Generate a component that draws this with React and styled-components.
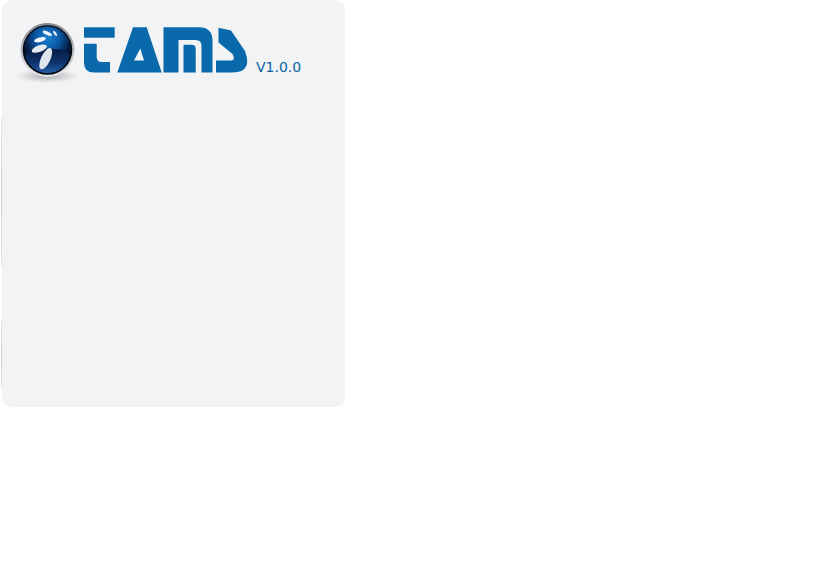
import React from "react";
import styled, { createGlobalStyle } from "styled-components";

const Global = createGlobalStyle`
  html, body { margin: 0; padding: 0; background: #fff; }
  body { font-family: "DejaVu Sans", Verdana, sans-serif; }
`;
const Page = styled.div`
  width: 815px;
  height: 575px;
  padding-left: 2px;
  box-sizing: border-box;
  overflow: hidden;
`;
const Panel = styled.aside`
  position: relative;
  width: 342.500px;
  height: 406.500px;
  background: #f1f3f5;
  border-radius: 10px;
  padding: 22px 0 0 13px;
  box-sizing: border-box;
  &::before, &::after {
    content: "";
    position: absolute;
    left: -1px;
    width: 1px;
    background: linear-gradient(180deg, #e6e8ea, #c9ccd0 50%, #e2e4e6);
  }
  &::before { top: 118px; height: 148px; }
  &::after { top: 320px; height: 68px; }
`;
const Brand = styled.div`
  display: flex;
  align-items: flex-start;
`;
const Mark = styled.svg`
  width: 66px;
  height: 64px;
  flex: none;
  filter: blur(0.35px);
`;
const Word = styled.svg`
  width: 166px;
  height: 50px;
  flex: none;
  margin: 4px 0 0 3px;
  filter: blur(0.25px);
`;
const Version = styled.span`
  color: #0a65a6;
  font-size: 14px;
  line-height: 17px;
  margin: 37px 0 0 6px;
`;

export default function App() {
  return (
    <Page>
      <Global />
      <Panel>
        <Brand>
          <Mark viewBox="15 22 66 64" role="img" aria-label="TAMS emblem">
            <defs>
              <radialGradient id="sh" cx="50%" cy="50%" r="50%">
                <stop offset="0%" stopColor="#6f6f6f" stopOpacity=".6" />
                <stop offset="100%" stopColor="#999" stopOpacity="0" />
              </radialGradient>
              <radialGradient id="ball" cx="50%" cy="24%" r="62%">
                <stop offset="0%" stopColor="#1a80d4" />
                <stop offset="45%" stopColor="#0a549f" />
                <stop offset="78%" stopColor="#051f42" />
                <stop offset="100%" stopColor="#02070f" />
              </radialGradient>
              <linearGradient id="low" x1="0" y1="0" x2="0" y2="1">
                <stop offset="0%" stopColor="#081a40" />
                <stop offset="60%" stopColor="#0f3570" />
                <stop offset="100%" stopColor="#2460a8" />
              </linearGradient>
              <linearGradient id="ring" x1="0" y1="0" x2="0" y2="1">
                <stop offset="0%" stopColor="#7d8186" />
                <stop offset="50%" stopColor="#b9bcc0" />
                <stop offset="100%" stopColor="#e6e8ea" />
              </linearGradient>
            </defs>
            <ellipse cx="47" cy="76" rx="32" ry="7" fill="url(#sh)" />
            <circle cx="47.500" cy="50" r="27" fill="url(#ring)" />
            <circle cx="47.500" cy="50" r="24.800" fill="#030b16" />
            <circle cx="47.500" cy="50" r="23.500" fill="url(#ball)" />
            <path d="M25 54 A22.800 22.800 0 0 0 70 54 C64 47 31 47 25 54Z" fill="url(#low)" />
            <ellipse cx="40" cy="39.700" rx="6" ry="2.300" transform="rotate(-15 40 39.700)" fill="#f4f6f9" />
            <ellipse cx="47.300" cy="33.300" rx="5" ry="1.700" transform="rotate(25 47.300 33.300)" fill="#f0f3f7" />
            <ellipse cx="55" cy="33.300" rx="3" ry="1.200" transform="rotate(55 55 33.300)" fill="#e8edf3" />
            <ellipse cx="39.300" cy="48.700" rx="8" ry="3.300" transform="rotate(-20 39.300 48.700)" fill="#e6eaef" />
            <ellipse cx="45.700" cy="58.700" rx="11.500" ry="4.600" transform="rotate(-65 45.700 58.700)" fill="#dfe5ec" />
          </Mark>
          <Word viewBox="84 26 166 50" role="img" aria-label="TAMS">
            <g fill="#0a69aa">
              <path d="M84 27.300H114.700V37.700H84z" />
              <path d="M84 43.700H96.700V57q0 5 5 5H110V72.500H94q-10 0-10-10z" />
              <path fillRule="evenodd" d="M117.300 72.500L133 27.300H146.700L161.700 72.500zM134 60.500H144L140.300 48.500z" />
              <path d="M163.500 27.300H199q13.500 0 13.500 13.500V72.500H201.500V46q0-6-6-6H178.500V72.500H163.500zM183.500 44.700H191.500q4.200 0 4.200 4.200V72.500H183.500z" />
              <path d="M218.500 27.800L231 30.500L245 51Q253 72.500 232 72.500H216V60.500H230Q236 60.500 232.500 54L218.500 42.500z" />
            </g>
          </Word>
          <Version>V1.0.0</Version>
        </Brand>
      </Panel>
    </Page>
  );
}
